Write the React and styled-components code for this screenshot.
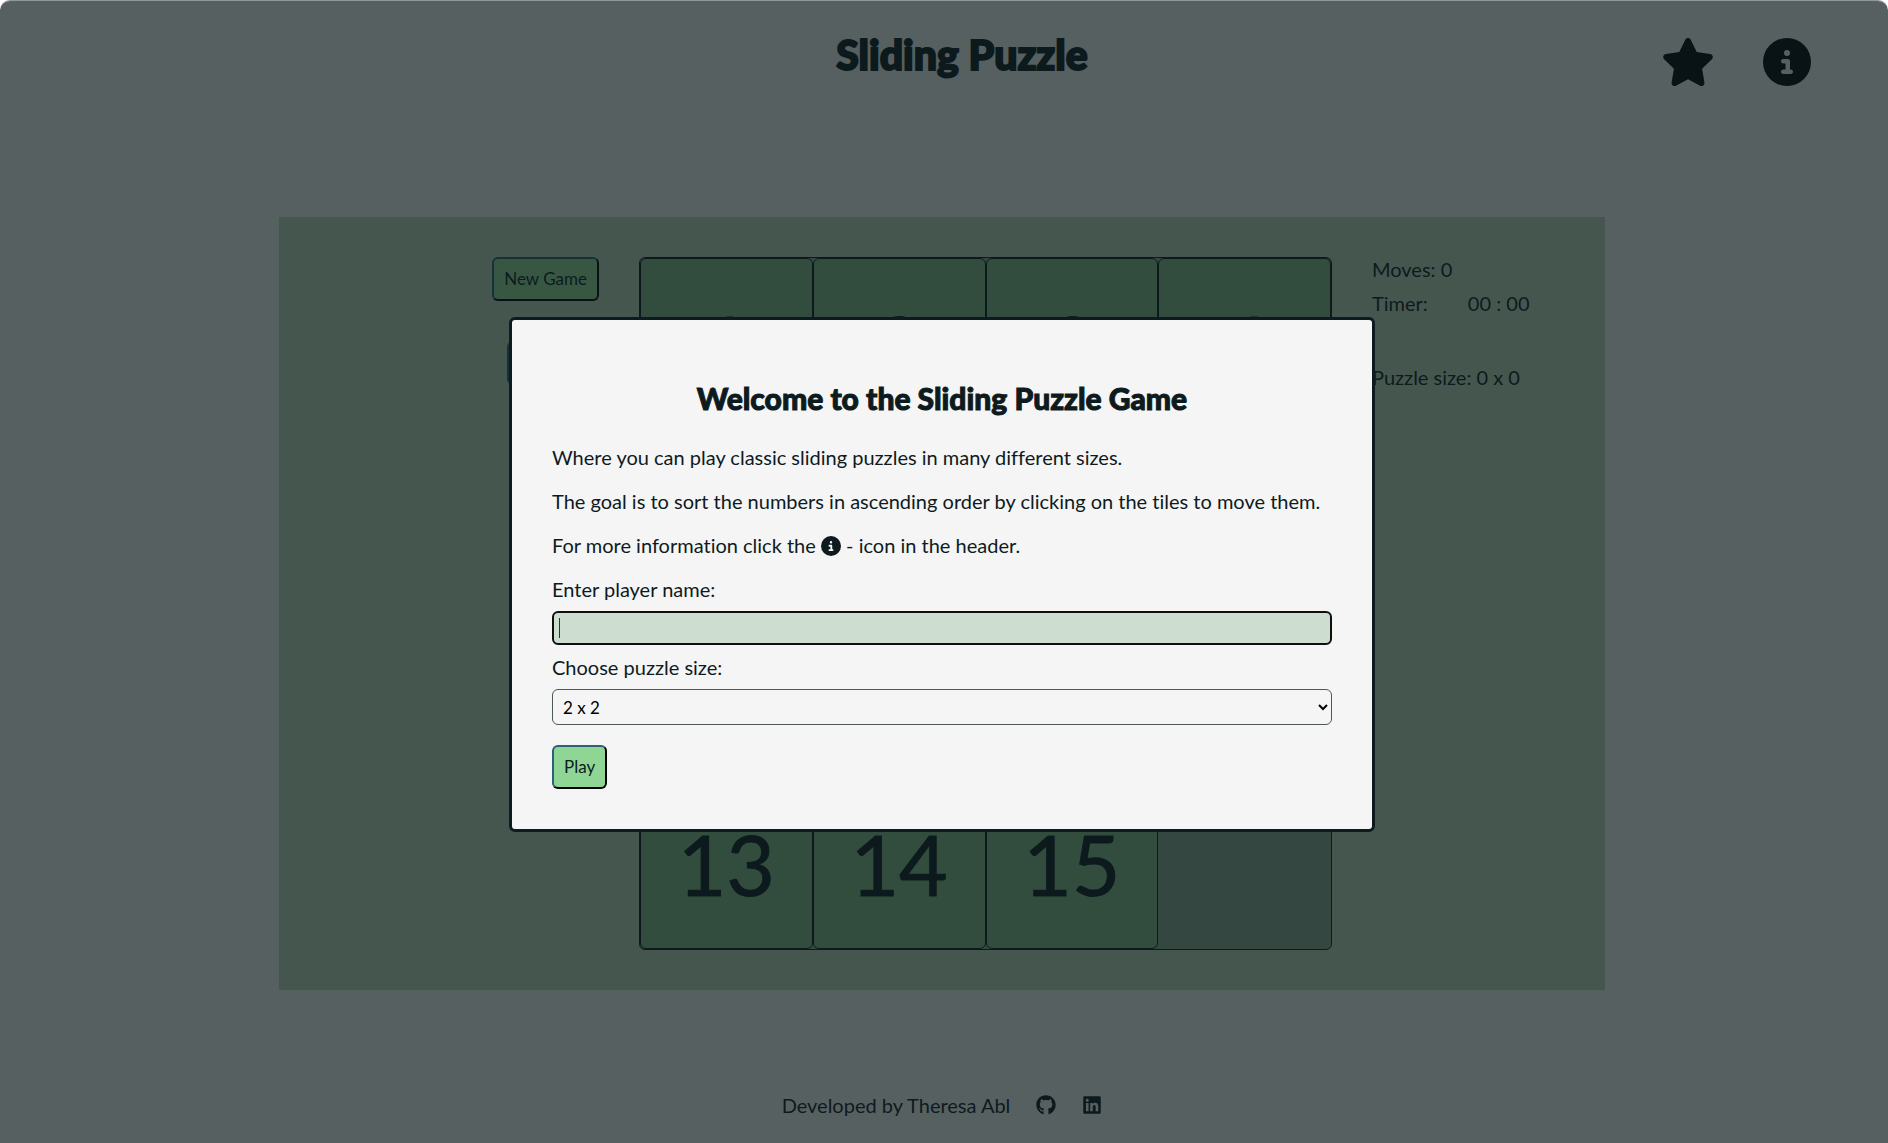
import React, { useState } from "react";
import styled, { createGlobalStyle } from "styled-components";
import { FaStar, FaCircleInfo, FaGithub, FaLinkedin } from "react-icons/fa6";

const ink = "#0d1b1e";
const paper = "#f5f5f5";

const GlobalStyle = createGlobalStyle`
  *, *::before, *::after { box-sizing: border-box; }
  body {
    margin: 0;
    color: ${ink};
    background: #fff;
    font-family: Lato, "Liberation Sans", sans-serif;
    font-size: 20px;
    line-height: 24px;
    font-variant-ligatures: none;
  }
  h1, h2, p { margin: 0; }
  button, input, select { font-family: inherit; color: inherit; }
`;

const Page = styled.div`
  min-height: 100vh;
  display: flex;
  flex-direction: column;
  align-items: center;
  padding-right: 4px;
  background: #f3f1ee;
  border-radius: 10px 10px 0 0;
`;

const Header = styled.header`
  align-self: stretch;
  display: grid;
  grid-template-columns: 1fr auto 1fr;
  align-items: start;
  height: 116px;
  padding: 30px 0 0 40px;
`;

const Title = styled.h1`
  grid-column: 2;
  font-size: 41px;
  line-height: 50px;
  font-weight: 900;
  -webkit-text-stroke: 2px ${ink};
`;

const HeaderActions = styled.nav`
  display: flex;
  justify-content: flex-end;
  gap: 48px;
  padding: 8px 73px 0 0;
`;

const IconButton = styled.button`
  display: flex;
  padding: 0;
  border: 0;
  background: none;
  color: #000;
  svg { width: ${(p) => p.$width || "48px"}; height: 48px; }
`;

const Game = styled.main`
  display: grid;
  grid-template-columns: 280px 693px 193px;
  gap: 40px;
  margin: auto 0;
  padding: 40px;
  background: #bcd3b7;
`;

const Controls = styled.div`
  display: flex;
  flex-direction: column;
  align-items: center;
  gap: 40px;
  justify-self: end;
`;

const Button = styled.button`
  padding: 10px;
  border: 2px solid;
  border-color: #2d6076 #000 #000 #2d6076;
  border-radius: 6px;
  background: #8fd694;
  font-size: 17px;
  line-height: 20px;
`;

const Board = styled.div`
  display: grid;
  grid-template-columns: repeat(4, 1fr);
  border: 1px solid ${ink};
  border-radius: 6px;
  background: #8aa58b;
`;

const Tile = styled.button`
  display: flex;
  align-items: center;
  justify-content: center;
  aspect-ratio: 1;
  padding: 2px 0 0;
  border: 1px solid ${ink};
  border-radius: 6px;
  background: #81b782;
  font-size: 84px;
  line-height: 96px;
  -webkit-text-stroke: 1px ${ink};
`;

const Stats = styled.div`
  display: flex;
  flex-direction: column;
  gap: 10px;
  white-space: nowrap;
`;

const TimerRow = styled.p`
  display: flex;
  gap: 40px;
  margin-bottom: 40px;
`;

const Footer = styled.footer`
  display: flex;
  align-items: center;
  gap: 26px;
  padding: 2px 0 26px;
`;

const FooterLink = styled.a`
  display: flex;
  color: inherit;
  svg { width: auto; height: 20px; }
`;

const Overlay = styled.div`
  position: fixed;
  inset: 0;
  display: flex;
  align-items: center;
  justify-content: center;
  padding: 5px 4px 0 0;
  border-top: 1px solid rgba(80, 96, 98, 0.6);
  border-radius: 10px 10px 0 0;
  background: rgba(13, 27, 30, 0.68);
  background-clip: padding-box;
`;

const Dialog = styled.form`
  display: flex;
  flex-direction: column;
  width: 866px;
  max-width: 100%;
  padding: 40px;
  border: 3px solid ${ink};
  border-radius: 6px;
  background: ${paper};
`;

const DialogTitle = styled.h2`
  margin: 20px 0 29px;
  font-size: 30px;
  line-height: 36px;
  font-weight: 900;
  text-align: center;
  -webkit-text-stroke: 1px ${ink};
`;

const Text = styled.p`
  margin-bottom: 20px;
  white-space: nowrap;
  svg { width: 20px; height: 20px; vertical-align: -3px; }
`;

const Label = styled.label`
  margin-bottom: 10px;
`;

const NameInput = styled.input`
  height: 34px;
  margin-bottom: 10px;
  padding: 0 5px;
  border: 2px solid #101010;
  border-radius: 6px;
  outline: none;
  background: linear-gradient(#333, #333) 5px center / 1px 20px no-repeat #cdddd0;
  caret-color: transparent;
  font-size: 18px;
`;

const SizeSelect = styled.select`
  height: 36px;
  margin-bottom: 20px;
  padding: 0 6px;
  border: 1px solid #4e585a;
  border-radius: 6px;
  background: transparent;
  color: #000;
  font-size: 17px;
`;

const PlayButton = styled(Button)`
  align-self: flex-start;
`;

const tiles = Array.from({ length: 15 }, (_, i) => i + 1);
const sizes = [2, 3, 4, 5, 6];

export default function App() {
  const [name, setName] = useState("");
  const [size, setSize] = useState(2);

  return (
    <>
      <GlobalStyle />
      <Page>
        <Header>
          <Title>Sliding Puzzle</Title>
          <HeaderActions>
            <IconButton $width="54px" aria-label="High scores"><FaStar /></IconButton>
            <IconButton aria-label="Information"><FaCircleInfo /></IconButton>
          </HeaderActions>
        </Header>
        <Game>
          <Controls>
            <Button type="button">New Game</Button>
            <Button type="button">Restart</Button>
          </Controls>
          <Board>
            {tiles.map((n) => (
              <Tile key={n} type="button">{n}</Tile>
            ))}
          </Board>
          <Stats>
            <p>Moves: 0</p>
            <TimerRow><span>Timer:</span><span>00 : 00</span></TimerRow>
            <p>Puzzle size: 0 x 0</p>
          </Stats>
        </Game>
        <Footer>
          <span>Developed by Theresa Abl</span>
          <FooterLink href="#github" aria-label="GitHub"><FaGithub /></FooterLink>
          <FooterLink href="#linkedin" aria-label="LinkedIn"><FaLinkedin /></FooterLink>
        </Footer>
      </Page>
      <Overlay>
        <Dialog onSubmit={(e) => e.preventDefault()}>
          <DialogTitle>Welcome to the Sliding Puzzle Game</DialogTitle>
          <Text>Where you can play classic sliding puzzles in many different sizes.</Text>
          <Text>The goal is to sort the numbers in ascending order by clicking on the tiles to move them.</Text>
          <Text>For more information click the <FaCircleInfo /> - icon in the header.</Text>
          <Label htmlFor="player">Enter player name:</Label>
          <NameInput id="player" autoFocus value={name} onChange={(e) => setName(e.target.value)} />
          <Label htmlFor="size">Choose puzzle size:</Label>
          <SizeSelect id="size" value={size} onChange={(e) => setSize(Number(e.target.value))}>
            {sizes.map((n) => (
              <option key={n} value={n}>{`${n} x ${n}`}</option>
            ))}
          </SizeSelect>
          <PlayButton type="submit">Play</PlayButton>
        </Dialog>
      </Overlay>
    </>
  );
}
